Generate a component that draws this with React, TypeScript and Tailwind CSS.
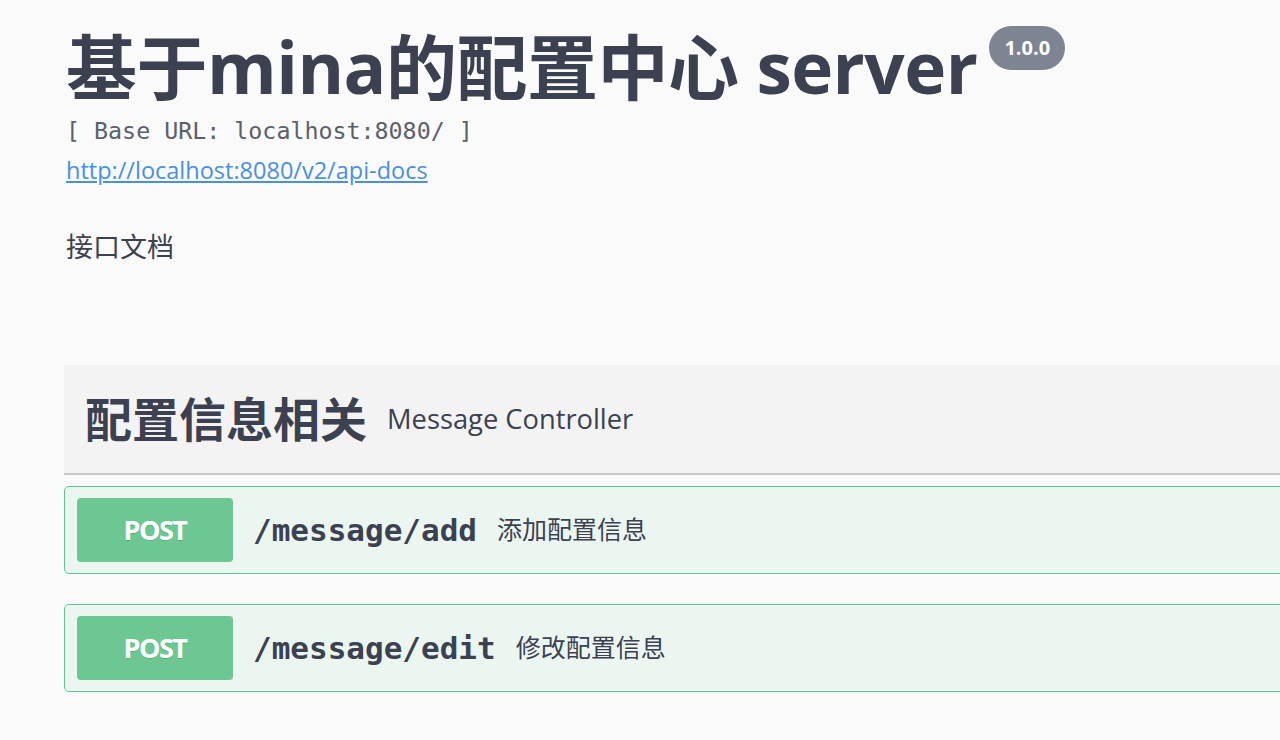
import React from "react";

function Op({ path, desc }: { path: string; desc: string }) {
  return (
    <div className="flex items-center h-[88px] border border-[#5ec592] bg-[#ecf6f1] rounded-[5px] pl-[12px] mr-[-10px]">
      <div className="w-[156px] h-[64px] rounded-[4px] bg-[#6cc793] flex items-center justify-center text-white text-[27px] font-bold tracking-[-1.5px] [text-shadow:0_1px_0_rgba(0,0,0,0.15)]">
        POST
      </div>
      <span className="ml-[20px] text-[31px] font-bold text-[#3b4151] font-['DejaVu_Sans_Mono','Liberation_Mono',monospace]">
        {path}
      </span>
      <span className="ml-[20px] text-[25px] text-[#3b4151]">{desc}</span>
    </div>
  );
}

export default function App() {
  return (
    <div className="w-[1280px] h-[740px] overflow-hidden bg-[#fafafa] text-[#3b4151] font-['Open_Sans','Noto_Sans','Noto_Sans_CJK_SC',sans-serif]">
      <div className="pl-[64px] pt-[19px]">
        <div className="flex items-start pl-[2px]">
          <h1 className="text-[71px] font-bold leading-[96px] text-[#3b4151] tracking-[-0.5px]">
            基于mina的配置中心 server
          </h1>
          <span className="ml-[12px] mt-[7px] h-[44px] px-[15px] rounded-[22px] bg-[#7d8492] text-white text-[20px] font-bold flex items-center">
            1.0.0
          </span>
        </div>
        <div className="pl-[2px] text-[23.3px] leading-[32px] text-[#5b606b] font-['DejaVu_Sans_Mono','Liberation_Mono',monospace]">
          [ Base URL: localhost:8080/ ]
        </div>
        <a className="block pl-[2px] mt-[7px] text-[23.5px] leading-[32px] text-[#4990e2] underline">
          http://localhost:8080/v2/api-docs
        </a>
        <div className="pl-[2px] mt-[45px] text-[27px] leading-[32px]">接口文档</div>
        <div className="mt-[102px] bg-[#f3f3f3] h-[110px] border-b-2 border-[#c9c9c9] flex items-center pl-[21px] mr-[-10px]">
          <span className="text-[47px] font-bold text-[#3b4151]">配置信息相关</span>
          <span className="ml-[20px] text-[27.3px] text-[#3b4151]">Message Controller</span>
        </div>
        <div className="mt-[11px] flex flex-col gap-[30px]">
          <Op path="/message/add" desc="添加配置信息" />
          <Op path="/message/edit" desc="修改配置信息" />
        </div>
      </div>
    </div>
  );
}
